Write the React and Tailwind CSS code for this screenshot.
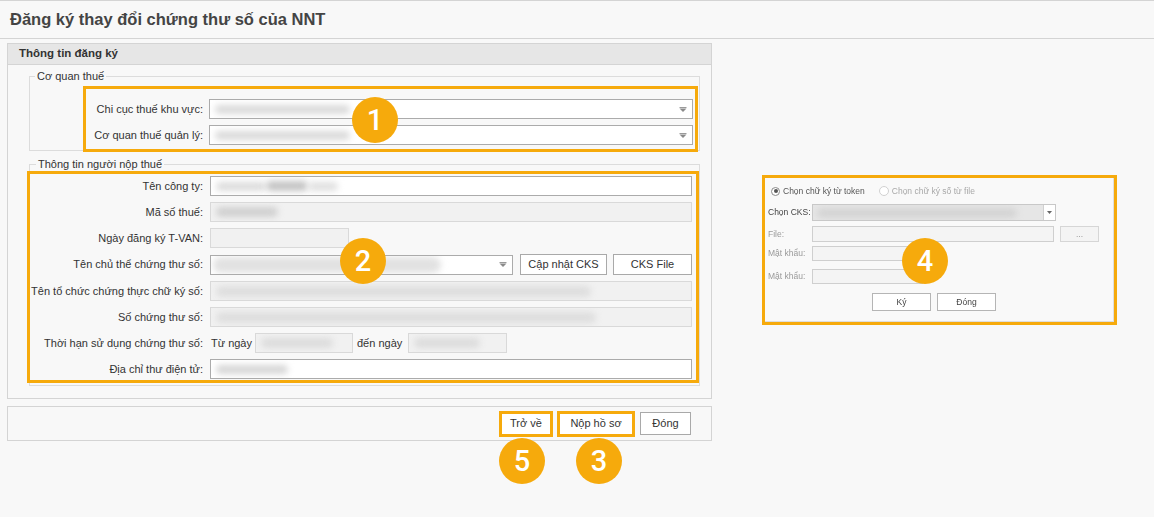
import React from "react";

const F = "font-['Liberation_Sans',Arial,sans-serif]";

function Blob({ className }) {
  return <div className={"rounded-full blur-[3px] shrink-0 " + className} />;
}

function Caret() {
  return (
    <svg width="8" height="5" viewBox="0 0 8 5" className="shrink-0">
      <rect x="0.5" y="0" width="7" height="1" fill="#9a9a9a" />
      <path d="M0.5 1.5h7L4 5z" fill="#8a8a8a" />
    </svg>
  );
}

function Badge({ n, className }) {
  return (
    <div
      className={
        "absolute w-[46px] h-[46px] rounded-full bg-[#f6aa0c] text-white flex items-center justify-center text-[29px] font-medium font-['Roboto',Arial,sans-serif] leading-none " +
        className
      }
    >
      {n}
    </div>
  );
}

function Label({ children }) {
  return <div className="text-right text-[11px] leading-5 text-[#333] whitespace-nowrap">{children}</div>;
}

const inWhite = "h-5 bg-white border border-[#ababab] flex items-center px-[5px] overflow-hidden";
const inGray = "h-5 bg-[#f1f1f1] border border-[#d9d9d9] flex items-center px-[5px] overflow-hidden";
const btn = "bg-white border border-[#a9a9a9] flex items-center justify-center text-[11px] text-[#333]";

export default function App() {
  return (
    <div className={"relative w-[1154px] h-[517px] overflow-hidden bg-[#f8f8f8] border-t border-[#d4d4d4] " + F}>
      {/* Title */}
      <div className="h-[38px] border-b border-[#d4d4d4] flex items-center pl-[10px]">
        <h1 className="text-[16.5px] font-bold text-[#444] leading-none">Đăng ký thay đổi chứng thư số của NNT</h1>
      </div>

      <div className="flex">
        {/* Left column */}
        <div className="ml-[7px] w-[705px] shrink-0">
          <div className="mt-[4px] border border-[#d4d4d4]">
            <div className="h-5 bg-[#e6e6e6] border-b border-[#d4d4d4] flex items-center pl-[11px] text-[11.5px] font-bold text-[#333] box-content">
              Thông tin đăng ký
            </div>
            <div className="pb-[12px]">
              {/* Fieldset 1 */}
              <fieldset className="ml-[21px] mr-[11px] mt-[5px] border border-[#dcdcdc]">
                <legend className="ml-[5px] px-[2px] text-[11px] leading-[13px] text-[#333]">Cơ quan thuế</legend>
                <div className="ml-[53px] mr-[1px] mt-[3px] -mb-[2px] border-[3px] border-[#f6aa0c] pt-[10px] pb-[4px] pr-[2px] grid grid-cols-[117px_1fr] gap-x-[6px] gap-y-[6px]">
                  <Label>Chi cục thuế khu vực:</Label>
                  <div className={inWhite + " justify-between"}>
                    <Blob className="w-[135px] h-[9px] bg-[#dadada]" />
                    <Caret />
                  </div>
                  <Label>Cơ quan thuế quản lý:</Label>
                  <div className={inWhite + " justify-between"}>
                    <Blob className="w-[135px] h-[9px] bg-[#dadada]" />
                    <Caret />
                  </div>
                </div>
              </fieldset>

              {/* Fieldset 2 */}
              <fieldset className="ml-[21px] mr-[11px] mt-[7px] border border-[#dcdcdc] pb-[2px]">
                <legend className="ml-[6px] px-[2px] text-[11px] leading-[13px] text-[#333]">Thông tin người nộp thuế</legend>
                <div className="-ml-[3px] border-[3px] border-[#f6aa0c] pt-[2px] pb-[1px] pr-[4px] grid grid-cols-[173px_1fr] gap-x-[7px] gap-y-[6px]">
                  <Label>Tên công ty:</Label>
                  <div className={inWhite}>
                    <Blob className="w-[50px] h-[9px] bg-[#dcdcdc]" />
                    <Blob className="w-[42px] h-[10px] bg-[#c4c4c4]" />
                    <Blob className="w-[30px] h-[9px] bg-[#e0e0e0]" />
                  </div>

                  <Label>Mã số thuế:</Label>
                  <div className={inGray}>
                    <Blob className="w-[62px] h-[10px] bg-[#d0d0d0]" />
                  </div>

                  <Label>Ngày đăng ký T-VAN:</Label>
                  <div className={inGray + " w-[139px]"} />

                  <Label>Tên chủ thể chứng thư số:</Label>
                  <div className="flex items-center">
                    <div className="w-[303px] h-5 bg-white border border-[#ababab] flex items-center justify-between pl-[2px] pr-[5px] overflow-hidden">
                      <Blob className="w-[228px] h-[16px] bg-[#e2e2e2] rounded-[3px]" />
                      <Caret />
                    </div>
                    <div className={btn + " ml-[7px] w-[87px] h-[21px]"}>Cập nhật CKS</div>
                    <div className={btn + " ml-[6px] w-[79px] h-[21px]"}>CKS File</div>
                  </div>

                  <Label>Tên tổ chức chứng thực chữ ký số:</Label>
                  <div className={inGray}>
                    <Blob className="w-[375px] h-[11px] bg-[#dedede]" />
                  </div>

                  <Label>Số chứng thư số:</Label>
                  <div className={inGray}>
                    <Blob className="w-[380px] h-[11px] bg-[#dedede]" />
                  </div>

                  <Label>Thời hạn sử dụng chứng thư số:</Label>
                  <div className="flex items-center text-[11px] text-[#333]">
                    <span className="ml-[1px] w-[44px]">Từ ngày</span>
                    <div className={inGray + " w-[98px]"}>
                      <Blob className="w-[72px] h-[10px] bg-[#dcdcdc]" />
                    </div>
                    <span className="ml-[4px] w-[51px]">đến ngày</span>
                    <div className={inGray + " w-[99px]"}>
                      <Blob className="w-[66px] h-[10px] bg-[#dcdcdc]" />
                    </div>
                  </div>

                  <Label>Địa chỉ thư điện tử:</Label>
                  <div className={inWhite}>
                    <Blob className="w-[72px] h-[9px] bg-[#d6d6d6]" />
                  </div>
                </div>
              </fieldset>
            </div>
          </div>

          {/* Bottom bar */}
          <div className="mt-[7px] h-[35px] border border-[#d4d4d4] flex items-center justify-end pr-[20px]">
            <div className="w-[54px] h-[26px] border-[3px] border-[#f6aa0c] bg-white flex items-center justify-center text-[11px] text-[#333]">
              Trở về
            </div>
            <div className="ml-[4px] w-[78px] h-[26px] border-[3px] border-[#f6aa0c] bg-white flex items-center justify-center text-[11px] text-[#333]">
              Nộp hồ sơ
            </div>
            <div className={btn + " ml-[5px] w-[51px] h-[23px]"}>Đóng</div>
          </div>
        </div>

        {/* Right: signing dialog preview */}
        <div className="ml-[50px] mt-[136px] w-[355px] h-[150px] shrink-0 border-[3px] border-[#f6aa0c] bg-[#f9f9f9]">
          <div className="h-full border-r border-b border-[#dedede] pl-[3px] pt-[8px] text-[8.5px] text-[#555] blur-[0.3px]">
            <div className="h-[10px] flex items-center">
              <div className="ml-[3px] w-[9px] h-[9px] rounded-full border border-[#8a8a8a] bg-white flex items-center justify-center">
                <div className="w-[4px] h-[4px] rounded-full bg-[#555]" />
              </div>
              <span className="ml-[3px]">Chọn chữ ký từ token</span>
              <div className="ml-[14px] w-[10px] h-[10px] rounded-full border border-[#d0d0d0] bg-white" />
              <span className="ml-[3px] text-[#a8a8a8]">Chọn chữ ký số từ file</span>
            </div>

            <div className="mt-[8px] flex items-center">
              <span className="w-[44px] text-[#444]">Chọn CKS:</span>
              <div className="w-[244px] h-[17px] border border-[#c8c8c8] bg-[#e6e6e6] flex items-center justify-between overflow-hidden">
                <Blob className="ml-[4px] w-[200px] h-[10px] bg-[#d4d4d4]" />
                <div className="w-[12px] h-full bg-white border-l border-[#d0d0d0] flex items-center justify-center">
                  <svg width="5" height="3" viewBox="0 0 5 3"><path d="M0 0h5L2.5 3z" fill="#666" /></svg>
                </div>
              </div>
            </div>

            <div className="mt-[5px] flex items-center">
              <span className="w-[44px] text-[#9a9a9a]">File:</span>
              <div className="w-[242px] h-[16px] border border-[#cfcfcf] bg-[#f4f4f4]" />
              <div className="ml-[6px] w-[39px] h-[16px] border border-[#d6d6d6] bg-[#f4f4f4] flex items-center justify-center text-[#999] leading-none">
                ...
              </div>
            </div>

            <div className="mt-[4px] flex items-center">
              <span className="w-[44px] text-[#9a9a9a]">Mật khẩu:</span>
              <div className="w-[111px] h-[15px] border border-[#cfcfcf] bg-[#f4f4f4]" />
            </div>

            <div className="mt-[8px] flex items-center">
              <span className="w-[44px] text-[#9a9a9a]">Mật khẩu:</span>
              <div className="w-[111px] h-[15px] border border-[#cfcfcf] bg-[#f4f4f4]" />
            </div>

            <div className="mt-[9px] ml-[104px] flex items-center">
              <div className="w-[59px] h-[18px] border border-[#b5b5b5] bg-white flex items-center justify-center text-[#444]">Ký</div>
              <div className="ml-[6px] w-[59px] h-[18px] border border-[#b5b5b5] bg-white flex items-center justify-center text-[#444]">Đóng</div>
            </div>
          </div>
        </div>
      </div>

      {/* Step badges */}
      <Badge n="1" className="left-[352px] top-[96px]" />
      <Badge n="2" className="left-[340px] top-[237px]" />
      <Badge n="4" className="left-[902px] top-[237px]" />
      <Badge n="5" className="left-[499px] top-[437px]" />
      <Badge n="3" className="left-[576px] top-[437px]" />
    </div>
  );
}
